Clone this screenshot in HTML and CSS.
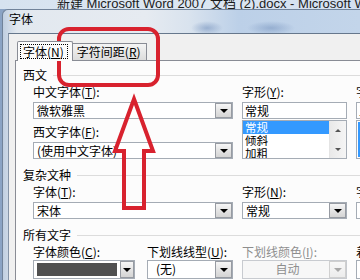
FILE: index.html
```html
<!DOCTYPE html>
<html lang="zh-CN">
<head>
  <meta charset="UTF-8" />
  <title>字体</title>
  <link rel="stylesheet" href="styles.css">
</head>
<body>
  <div class="screen">
    <div class="word-title"><span>新建 Microsoft Word 2007 文档 (2).docx - Microsoft Word</span></div>

    <div class="dialog">
      <div class="dlg-title">字体</div>

      <div class="client">
        <!-- tab strip -->
        <div class="tabs">
          <div class="tab active"><span class="focus">字体(<u>N</u>)</span></div>
          <div class="tab">字符间距(<u>R</u>)</div>
        </div>

        <div class="panel">
          <section class="group">
            <div class="group-head">西文</div>
            <div class="fields fields-main">
              <div class="field">
                <div class="label">中文字体(<u>T</u>):</div>
                <div class="combo"><span class="val">微软雅黑</span><span class="btn"></span></div>
              </div>
              <div class="field span2">
                <div class="label">字形(<u>Y</u>):</div>
                <div class="edit">常规</div>
                <div class="list">
                  <div class="items">
                    <div class="item sel">常规</div>
                    <div class="item">倾斜</div>
                    <div class="item">加粗</div>
                  </div>
                  <div class="vscroll"><i class="up"></i><i class="down"></i></div>
                </div>
              </div>
              <div class="field span2">
                <div class="label">字号(<u>S</u>):</div>
                <div class="edit">五号</div>
                <div class="list">
                  <div class="items">
                    <div class="item sel tall">五号</div>
                  </div>
                </div>
              </div>
              <div class="field">
                <div class="label">西文字体(<u>F</u>):</div>
                <div class="combo"><span class="val">(使用中文字体)</span><span class="btn"></span></div>
              </div>
            </div>
          </section>

          <section class="group">
            <div class="group-head">复杂文种</div>
            <div class="fields fields-main">
              <div class="field">
                <div class="label">字体(<u>T</u>):</div>
                <div class="combo"><span class="val">宋体</span><span class="btn"></span></div>
              </div>
              <div class="field">
                <div class="label">字形(<u>N</u>):</div>
                <div class="combo"><span class="val">常规</span><span class="btn"></span></div>
              </div>
              <div class="field">
                <div class="label">字号(<u>Z</u>):</div>
                <div class="combo"><span class="val">五号</span><span class="btn"></span></div>
              </div>
            </div>
          </section>

          <section class="group">
            <div class="group-head">所有文字</div>
            <div class="fields fields-all">
              <div class="field w-color">
                <div class="label">字体颜色(<u>C</u>):</div>
                <div class="combo tall"><span class="swatch"></span><span class="btn narrow"></span></div>
              </div>
              <div class="field w-line">
                <div class="label">下划线线型(<u>U</u>):</div>
                <div class="combo tall"><span class="val pad">(无)</span><span class="btn"></span></div>
              </div>
              <div class="field w-ucolor disabled">
                <div class="label">下划线颜色(<u>I</u>):</div>
                <div class="combo tall"><span class="val center">自动</span><span class="btn"></span></div>
              </div>
              <div class="field w-emph">
                <div class="label">着重号(·):</div>
                <div class="combo tall"><span class="val">(无)</span><span class="btn"></span></div>
              </div>
            </div>
          </section>
        </div>
      </div>
    </div>

    <!-- red annotation drawn over the dialog -->
    <svg class="mark" width="360" height="280" viewBox="0 0 360 280">
      <rect x="59" y="29" width="99" height="56" rx="10" ry="10" />
      <polygon points="134,99 153,151 144,151 144,208 124,208 124,151 115,151" />
    </svg>
  </div>
</body>
</html>
```

FILE: styles.css
```css
* {
  box-sizing: border-box;
}

body {
  margin: 0;
  font-family: "Noto Sans CJK SC", sans-serif;
  font-size: 12px;
  color: #000;
}

.screen {
  position: relative;
  width: 360px;
  height: 280px;
  overflow: hidden;
  background: linear-gradient(to right, #8aa3c4, #a9bdd8);
}

u {
  text-decoration: underline;
  text-underline-offset: 1px;
}

/* Word window title behind the dialog */
.word-title {
  height: 9px;
  overflow: hidden;
  padding-left: 57px;
  white-space: nowrap;
  background: linear-gradient(to right, #d6e2ef, #dde7f2 50%, #d2dff0);
}

.word-title span {
  display: block;
  margin-top: -1px;
  font: 13px/9px "Liberation Sans", "Noto Sans CJK SC", sans-serif;
  color: #1c1c1c;
}

/* dialog frame */
.dialog {
  margin-left: 2px;
  height: 271px;
  border-top: 1px solid #71839a;
  border-left: 1px solid #71839a;
  border-top-left-radius: 6px;
  background:
    radial-gradient(ellipse 16px 7px at 204px 18px, rgba(110, 140, 185, 0.55), transparent),
    radial-gradient(ellipse 24px 7px at 268px 18px, rgba(110, 140, 185, 0.5), transparent),
    linear-gradient(to right, #c0cfe1, #e2e8ef 14px, #e6ebf1 40%, #d9e3ee 52%, #bcd0e8 66%, #c3d5ea 100%);
}

.dlg-title {
  height: 23px;
  padding-left: 6px;
  line-height: 17px;
  color: #000;
}

.client {
  margin-left: 5px;
  height: 247px;
  border-top: 1px solid #66778c;
  border-left: 1px solid #8594a7;
  background: #f0f0f0;
}

/* tabs */
.tabs {
  display: flex;
  align-items: flex-end;
  height: 26px;
  padding-left: 8px;
}

.tab {
  height: 17px;
  padding: 0 5px 0 4px;
  border: 1px solid #898c95;
  border-bottom: none;
  margin-left: -1px;
  line-height: 16px;
  white-space: nowrap;
  background: linear-gradient(#f4f4f4, #e8e8e8 50%, #dcdcdc);
}

.tab.active {
  position: relative;
  z-index: 1;
  height: 20px;
  margin-left: 0;
  margin-bottom: -1px;
  padding: 2px 4px 0 2px;
  border-radius: 2px 2px 0 0;
  background: #fcfcfc;
}

.focus {
  display: block;
  height: 15px;
  padding: 0 3px 0 2px;
  border: 1px dotted #000;
  line-height: 13px;
}

.panel {
  margin-left: 6px;
  height: 220px;
  padding: 7px 0 0 7px;
  border-top: 1px solid #898c95;
  border-left: 1px solid #898c95;
  background: #fcfcfc;
  overflow: hidden;
}

/* groups */
.group + .group {
  margin-top: 9px;
}

.group-head {
  display: flex;
  align-items: center;
  height: 14px;
  line-height: 14px;
  white-space: nowrap;
}

.group-head::after {
  content: "";
  flex: 1;
  height: 1px;
  margin-left: 6px;
  background: #dcdcdc;
}

.fields {
  margin-top: 3px;
  padding-left: 10px;
}

.fields-main {
  display: grid;
  grid-template-columns: 200px 105px 100px;
  column-gap: 9px;
  row-gap: 6px;
}

.span2 {
  grid-row: span 2;
}

.fields-all {
  display: flex;
  gap: 9px;
}

.w-color { width: 102px; flex: none; margin-right: 3px; }
.w-line { width: 86px; flex: none; }
.w-ucolor { width: 105px; flex: none; }
.w-emph { width: 100px; flex: none; }

.label {
  height: 14px;
  margin-bottom: 3px;
  line-height: 14px;
  white-space: nowrap;
}

.fields-all .label {
  margin-bottom: 1px;
}

/* combo boxes */
.combo {
  display: flex;
  height: 17px;
  border: 1px solid #a5acb5;
  background: #fff;
}

.combo.tall {
  height: 19px;
}

.val {
  flex: 1;
  padding-left: 3px;
  line-height: 15px;
  white-space: nowrap;
  overflow: hidden;
}

.val.pad {
  padding-left: 8px;
}

.val.center {
  text-align: center;
}

.btn {
  position: relative;
  width: 17px;
  flex: none;
  border: 1px solid #979ba2;
  background: linear-gradient(#f6f6f6, #e4e4e4 50%, #d4d4d4);
}

.btn.narrow {
  width: 14px;
}

.btn::after {
  content: "";
  position: absolute;
  left: 50%;
  top: 50%;
  margin: -2px 0 0 -4px;
  border-left: 4px solid transparent;
  border-right: 4px solid transparent;
  border-top: 4px solid #000;
}

.swatch {
  flex: 1;
  margin: 2px 3px 2px 3px;
  background: #505050;
}

.disabled .label,
.disabled .val {
  color: #8e8e8e;
}

.disabled .combo {
  border-color: #c8cbd0;
  background: #f7f7f7;
}

.disabled .btn {
  border-color: #d0d0d0;
  background: linear-gradient(#f8f8f8, #ececec);
}

.disabled .btn::after {
  border-top-color: #a8a8a8;
}

/* edit + list (字形 / 字号) */
.edit {
  height: 17px;
  padding-left: 2px;
  border: 1px solid #a5acb5;
  line-height: 15px;
  background: #fff;
  white-space: nowrap;
}

.list {
  display: flex;
  height: 39px;
  margin-top: 1px;
  border: 1px solid #a5acb5;
  background: #fff;
  overflow: hidden;
}

.items {
  flex: 1;
  overflow: hidden;
}

.item {
  height: 13px;
  padding-left: 2px;
  font-size: 11.5px;
  line-height: 13px;
  white-space: nowrap;
  overflow: hidden;
}

.item.sel {
  background: #3399ff;
  color: #fff;
}

.item.tall {
  height: 35px;
  margin: 1px 0 0 1px;
}

.vscroll {
  width: 17px;
  display: flex;
  flex-direction: column;
  align-items: center;
  justify-content: space-between;
  padding: 8px 0 7px;
  border-left: 1px solid #e4e4e4;
  background: linear-gradient(to right, #e9e9e9, #f5f5f5);
}

.vscroll i {
  width: 0;
  height: 0;
  border-left: 3px solid transparent;
  border-right: 3px solid transparent;
}

.vscroll .up {
  border-bottom: 3px solid #555;
}

.vscroll .down {
  border-top: 3px solid #555;
}

/* red hand-drawn marks */
.mark {
  position: absolute;
  left: 0;
  top: 0;
  pointer-events: none;
  fill: none;
  stroke: #d8222e;
  stroke-width: 4;
}
```
